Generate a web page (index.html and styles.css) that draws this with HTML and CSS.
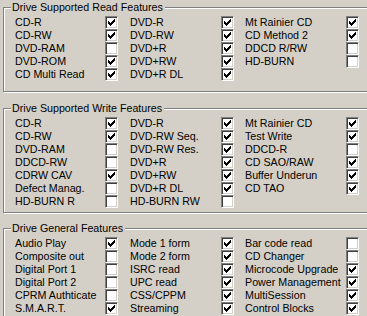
FILE: index.html
```html
<!DOCTYPE html>
<html lang="en">
<head>
    <meta charset="UTF-8">
    <meta name="viewport" content="width=device-width, initial-scale=1.0">
    <title>Drive Features</title>
    <link rel="stylesheet" href="styles.css">
</head>
<body>
    <div class="group group-read">
        <span class="group-title">Drive Supported Read Features</span>
        <div class="features">
            <span>CD-R</span><span class="check on"></span>
            <span>DVD-R</span><span class="check on"></span>
            <span>Mt Rainier CD</span><span class="check on"></span>

            <span>CD-RW</span><span class="check on"></span>
            <span>DVD-RW</span><span class="check on"></span>
            <span>CD Method 2</span><span class="check on"></span>

            <span>DVD-RAM</span><span class="check"></span>
            <span>DVD+R</span><span class="check on"></span>
            <span>DDCD R/RW</span><span class="check"></span>

            <span>DVD-ROM</span><span class="check on"></span>
            <span>DVD+RW</span><span class="check on"></span>
            <span>HD-BURN</span><span class="check"></span>

            <span>CD Multi Read</span><span class="check on"></span>
            <span>DVD+R DL</span><span class="check on"></span>
        </div>
    </div>

    <div class="group group-write">
        <span class="group-title">Drive Supported Write Features</span>
        <div class="features">
            <span>CD-R</span><span class="check on"></span>
            <span>DVD-R</span><span class="check on"></span>
            <span>Mt Rainier CD</span><span class="check on"></span>

            <span>CD-RW</span><span class="check on"></span>
            <span>DVD-RW Seq.</span><span class="check on"></span>
            <span>Test Write</span><span class="check on"></span>

            <span>DVD-RAM</span><span class="check"></span>
            <span>DVD-RW Res.</span><span class="check on"></span>
            <span>DDCD-R</span><span class="check"></span>

            <span>DDCD-RW</span><span class="check"></span>
            <span>DVD+R</span><span class="check on"></span>
            <span>CD SAO/RAW</span><span class="check on"></span>

            <span>CDRW CAV</span><span class="check on"></span>
            <span>DVD+RW</span><span class="check on"></span>
            <span>Buffer Underun</span><span class="check on"></span>

            <span>Defect Manag.</span><span class="check"></span>
            <span>DVD+R DL</span><span class="check on"></span>
            <span>CD TAO</span><span class="check on"></span>

            <span>HD-BURN R</span><span class="check"></span>
            <span>HD-BURN RW</span><span class="check"></span>
        </div>
    </div>

    <div class="group group-general">
        <span class="group-title">Drive General Features</span>
        <div class="features">
            <span>Audio Play</span><span class="check on"></span>
            <span>Mode 1 form</span><span class="check on"></span>
            <span>Bar code read</span><span class="check"></span>

            <span>Composite out</span><span class="check"></span>
            <span>Mode 2 form</span><span class="check on"></span>
            <span>CD Changer</span><span class="check"></span>

            <span>Digital Port 1</span><span class="check"></span>
            <span>ISRC read</span><span class="check on"></span>
            <span>Microcode Upgrade</span><span class="check on"></span>

            <span>Digital Port 2</span><span class="check"></span>
            <span>UPC read</span><span class="check on"></span>
            <span>Power Management</span><span class="check on"></span>

            <span>CPRM Authticate</span><span class="check"></span>
            <span>CSS/CPPM</span><span class="check on"></span>
            <span>MultiSession</span><span class="check on"></span>

            <span>S.M.A.R.T.</span><span class="check on"></span>
            <span>Streaming</span><span class="check on"></span>
            <span>Control Blocks</span><span class="check on"></span>
        </div>
    </div>

    <script>
        // draw the classic 7x7 tick into every checked box
        var tick = '<svg width="7" height="7" viewBox="0 0 7 7" shape-rendering="crispEdges">' +
            '<path fill="#000" d="M0 2h1v3H0zM1 3h1v3H1zM2 4h1v3H2zM3 3h1v3H3zM4 2h1v3H4zM5 1h1v3H5zM6 0h1v3H6z"/></svg>';
        document.querySelectorAll(".check.on").forEach(function (box) {
            box.innerHTML = tick;
        });
    </script>
</body>
</html>
```

FILE: styles.css
```css
html, body {
    overflow: hidden;
}
body {
    margin: 0;
    padding: 7px 0 0 3px;
    background-color: #d4d0c8;
    font-family: "Liberation Sans", Arial, sans-serif;
    font-size: 10.7px;
    color: #000;
}
.group {
    position: relative;
    width: 380px;
    border: 1px solid #808080;
    box-shadow: inset 1px 1px #fff, 1px 1px #fff;
    padding: 8px 0 0 11px;
    box-sizing: border-box;
}
.group-read {
    height: 85px;
}
.group-write {
    height: 105px;
    margin-top: 16px;
}
.group-general {
    height: 89px;
    margin-top: 15px;
}
.group-title {
    position: absolute;
    top: -7px;
    left: 7px;
    padding: 0 2px 0 1px;
    line-height: 13px;
    background-color: #d4d0c8;
    white-space: nowrap;
}
.features {
    display: grid;
    grid-template-columns: 90px 25px 91px 24px 101px 13px;
    grid-auto-rows: 13px;
    line-height: 13px;
    white-space: nowrap;
}
.check {
    width: 13px;
    height: 13px;
    box-sizing: border-box;
    background: #fff;
    border: 1px solid;
    border-color: #808080 #fff #fff #808080;
    box-shadow: inset 1px 1px #404040, inset -1px -1px #d4d0c8;
}
.check svg {
    display: block;
    margin: 2px;
}
```
